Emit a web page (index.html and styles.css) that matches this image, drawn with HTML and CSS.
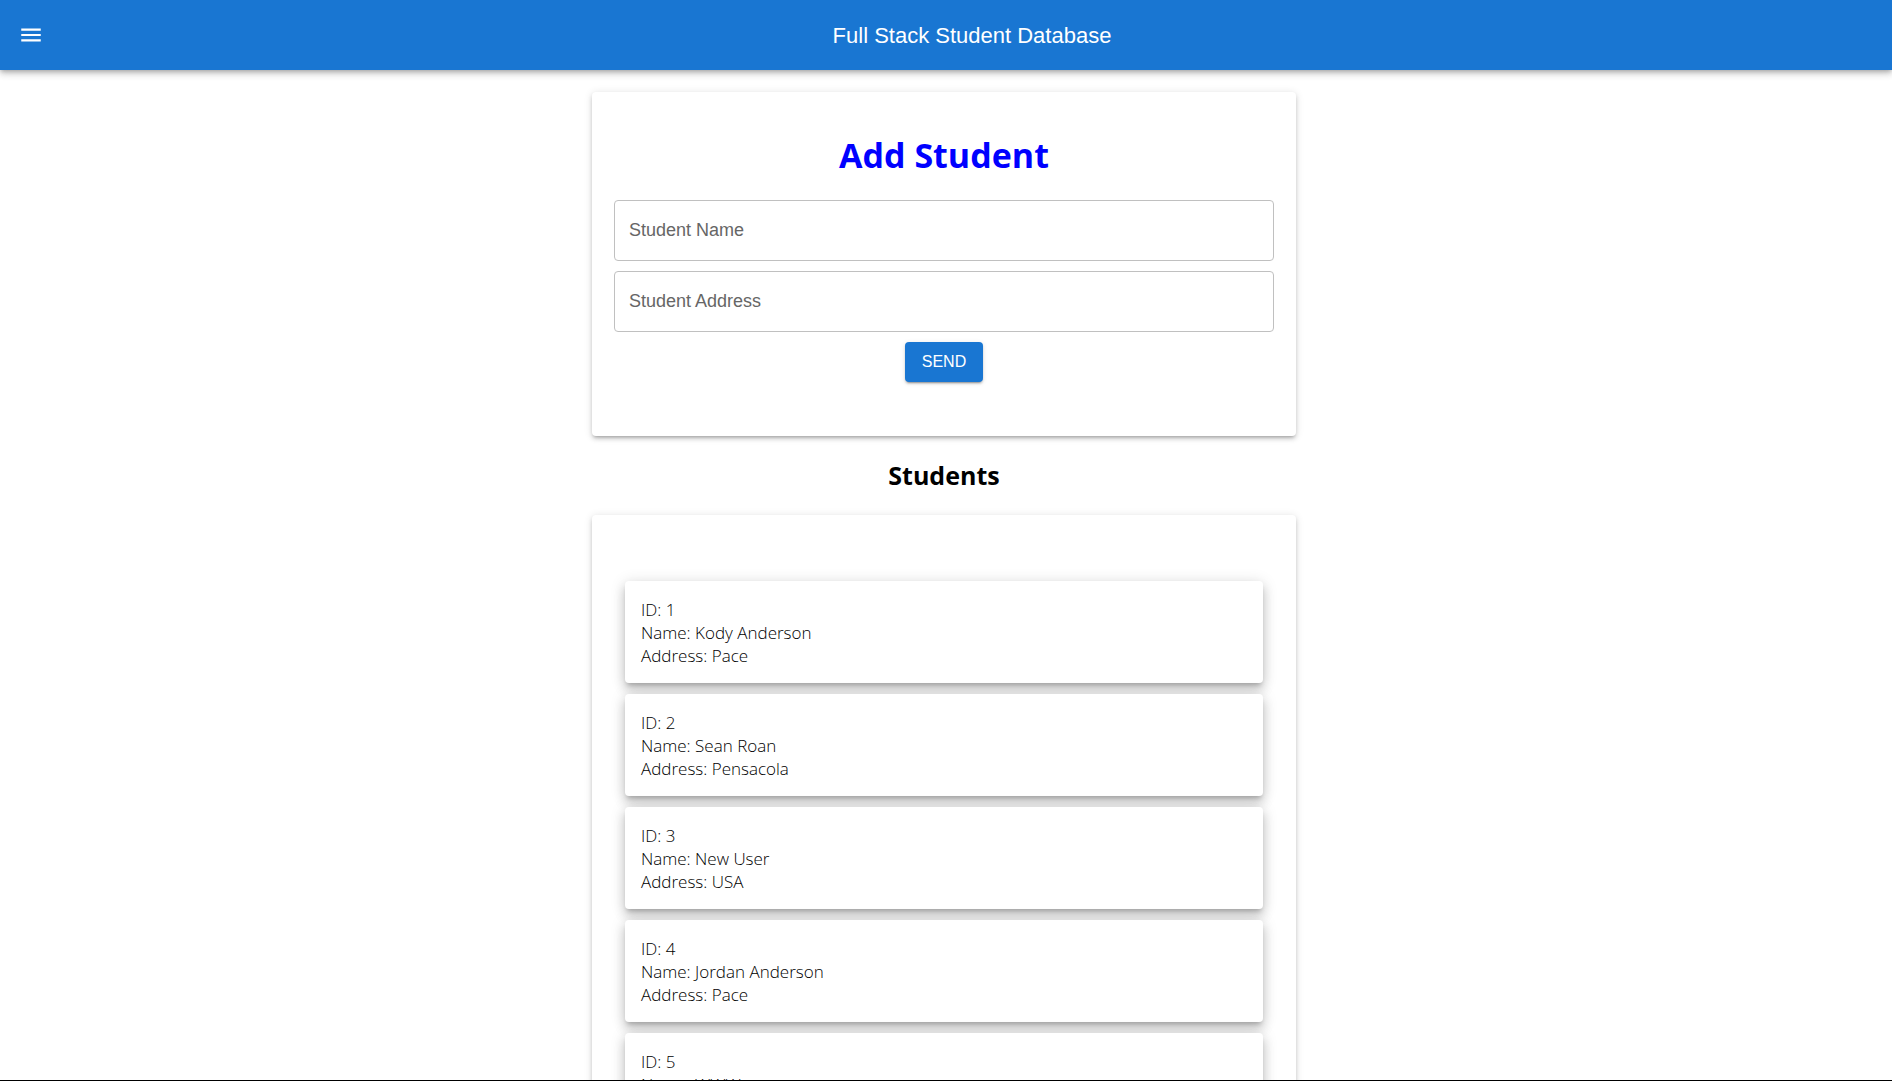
FILE: index.html
```html
<!DOCTYPE html>
<html lang="en">
<head>
  <meta charset="utf-8">
  <meta name="viewport" content="width=device-width, initial-scale=1">
  <title>Full Stack Student Database</title>
  <link rel="stylesheet" href="styles.css">
</head>
<body>
  <header class="app-bar">
    <button class="menu-button" type="button" aria-label="menu">
      <svg class="menu-icon" viewBox="0 0 24 24" aria-hidden="true"><path d="M3 18h18v-2H3v2zm0-5h18v-2H3v2zm0-7v2h18V6H3z"/></svg>
    </button>
    <div class="app-title">Full Stack Student Database</div>
  </header>
  <main class="content">
    <section class="paper">
      <h1 class="form-title">Add Student</h1>
      <form class="student-form">
        <input class="field" type="text" placeholder="Student Name" aria-label="Student Name">
        <input class="field" type="text" placeholder="Student Address" aria-label="Student Address">
        <button class="send-button" type="button">SEND</button>
      </form>
    </section>
    <h2 class="list-title">Students</h2>
    <section class="paper list-paper">
      <ul class="student-list">
        <li class="student">ID: 1<br>Name: Kody Anderson<br>Address: Pace</li>
        <li class="student">ID: 2<br>Name: Sean Roan<br>Address: Pensacola</li>
        <li class="student">ID: 3<br>Name: New User<br>Address: USA</li>
        <li class="student">ID: 4<br>Name: Jordan Anderson<br>Address: Pace</li>
        <li class="student">ID: 5<br>Name: WWW</li>
      </ul>
    </section>
  </main>
</body>
</html>
```
FILE: styles.css
```css
* {
  box-sizing: border-box;
}

body {
  display: flex;
  flex-direction: column;
  height: 100vh;
  margin: 0;
  border-bottom: 1px solid #000;
  background: #fff;
  color: #000;
  font-family: "Segoe UI", "Open Sans", sans-serif;
}

.app-bar {
  display: flex;
  flex: none;
  align-items: center;
  gap: 26px;
  height: 70px;
  padding: 0 18px;
  background: #1976d2;
  color: #fff;
  box-shadow: 0 2px 4px -1px rgba(0, 0, 0, 0.2), 0 4px 6px 0 rgba(0, 0, 0, 0.14), 0 1px 11px 0 rgba(0, 0, 0, 0.12);
  z-index: 1;
}

.menu-button {
  display: flex;
  padding: 0;
  border: 0;
  background: none;
  color: inherit;
  cursor: pointer;
}

.menu-icon {
  width: 26px;
  height: 26px;
  fill: currentColor;
}

.app-title {
  flex: 1;
  text-align: center;
  font: 22px/35px "Liberation Sans", Arial, sans-serif;
}

.content {
  flex: 1;
  min-height: 0;
  padding: 22px 28px 22px 24px;
  overflow-y: auto;
  scrollbar-width: none;
}

.paper {
  max-width: 704px;
  margin: 0 auto;
  padding: 22px;
  border-radius: 4px;
  background: #fff;
  box-shadow: 0 3px 3px -2px rgba(0, 0, 0, 0.2), 0 3px 4px 0 rgba(0, 0, 0, 0.14), 0 1px 9px 0 rgba(0, 0, 0, 0.12);
}

.form-title {
  margin: 18px 0 22px;
  color: #00f;
  font-size: 34px;
  font-weight: 700;
  line-height: 46px;
  text-align: center;
}

.student-form {
  display: flex;
  flex-direction: column;
  align-items: center;
  gap: 10px;
  padding-bottom: 32px;
}

.field {
  width: 100%;
  height: 61px;
  padding: 0 14px;
  border: 1px solid #c0c0c0;
  border-radius: 4px;
  background: #fff;
  color: rgba(0, 0, 0, 0.87);
  font: 18px "Liberation Sans", Arial, sans-serif;
}

.field::placeholder {
  color: #666;
  opacity: 1;
}

.send-button {
  padding: 0 17px;
  border: 0;
  border-radius: 4px;
  background: #1976d2;
  color: #fff;
  font: 16px/40px "Liberation Sans", Arial, sans-serif;
  cursor: pointer;
  box-shadow: 0 3px 1px -2px rgba(0, 0, 0, 0.2), 0 2px 2px 0 rgba(0, 0, 0, 0.14), 0 1px 5px 0 rgba(0, 0, 0, 0.12);
}

.list-title {
  margin: 22px 0;
  font-size: 25px;
  font-weight: 700;
  line-height: 35px;
  text-align: center;
}

.list-paper {
  padding: 66px 33px;
}

.student-list {
  display: flex;
  flex-direction: column;
  gap: 11px;
  margin: 0;
  padding: 0;
  list-style: none;
}

.student {
  padding: 17px 16px 16px;
  border-radius: 4px;
  background: #fff;
  color: #000;
  font-size: 17px;
  font-weight: 300;
  line-height: 23px;
  box-shadow: 0 4px 4px -2px rgba(0, 0, 0, 0.2), 0 7px 11px 1px rgba(0, 0, 0, 0.14), 0 2px 15px 1px rgba(0, 0, 0, 0.12);
}
```
